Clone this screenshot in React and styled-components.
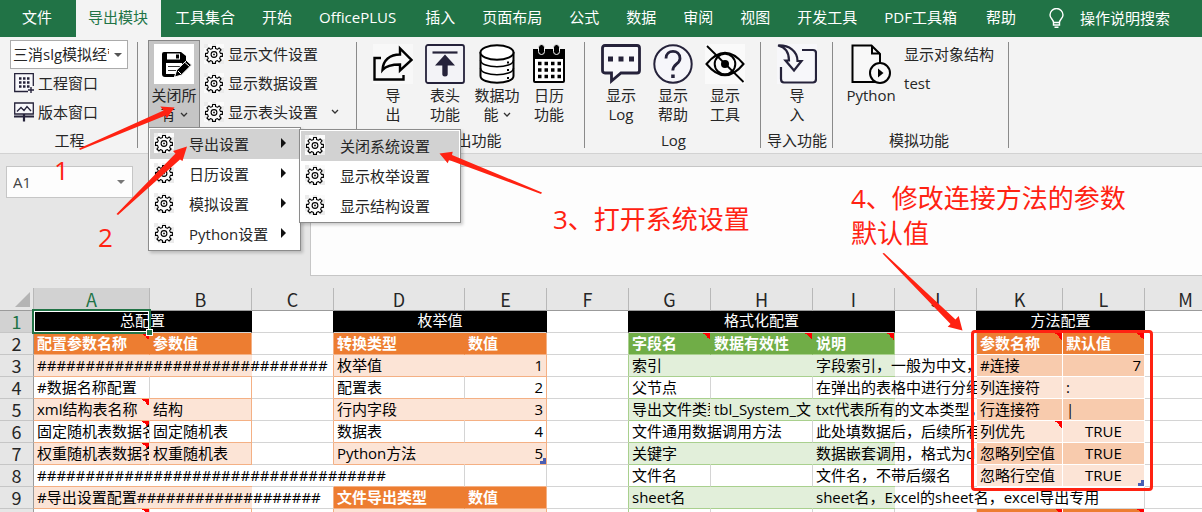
import React from "react";
import styled, { createGlobalStyle, css } from "styled-components";

const sans = `"Open Sans", "Noto Sans CJK SC", sans-serif`;
const GREEN = "#217346";
const RED = "#ff2212";
const ORANGE = "#ed7d31";
const PEACH = "#fce4d6";
const TAN = "#f8cbad";
const OLINE = "#f4b084";
const LEAF = "#70ad47";
const MINT = "#e2efda";
const GLINE = "#a9d08e";
const LINE = "#d4d4d4";

const Global = createGlobalStyle`
  * { box-sizing: border-box; }
  body { margin: 0; overflow: hidden; background: #e6e6e6; font: 15px/20px ${sans}; color: #262626; }
  button, input, select { font: inherit; color: inherit; margin: 0; padding: 0; border: 0; background: none; }
  svg { display: block; flex: none; }
`;

const Page = styled.div`
  position: relative;
  display: flex;
  flex-direction: column;
  height: 100vh;
  overflow: hidden;
`;

/* tab strip */
const Tabs = styled.nav`
  display: flex;
  height: 37px;
  background: ${GREEN};
`;
const Tab = styled.button`
  padding: 0 ${(p) => p.$latin ? 15 : 13}px 4px 14px;
  color: #fff;
  white-space: nowrap;
  ${(p) => p.$file && css`padding: 0 24px 4px 22px;`}
  ${(p) => p.$active && css`padding: 0 13px 4px 12px; background: #f3f3f3; color: ${GREEN};`}
`;
const Search = styled.button`
  display: flex;
  align-items: center;
  gap: 16px;
  padding: 0 14px 2px 20px;
  color: #fff;
  white-space: nowrap;
`;

/* ribbon */
const Ribbon = styled.div`
  display: flex;
  height: 117px;
  background: #f3f3f3;
  border-bottom: 1px solid #d2d2d2;
`;
const Group = styled.section`
  position: relative;
  display: flex;
  flex-direction: column;
  padding: 3px ${(p) => p.$right ?? 9}px 0 ${(p) => p.$left ?? 10}px;
  background: linear-gradient(#8a8a8a, #8a8a8a) right 5px / 1px 106px no-repeat;
`;
const GroupBody = styled.div`
  display: flex;
  height: 90px;
  padding-right: 1px;
`;
const GroupLabel = styled.div`
  height: 20px;
  text-align: center;
  white-space: nowrap;
`;
const BigButton = styled.button`
  display: flex;
  flex-direction: column;
  align-items: center;
  width: ${(p) => p.$wide ? 56 : 52}px;
  height: 88px;
  padding-top: 4px;
  line-height: 19px;
  border: 0 solid #868686;
  ${(p) => p.$pressed && css`background: #c5c5c5; border-width: 1px; padding-top: 3px;`}
`;
const BigText = styled.span`
  display: flex;
  align-items: center;
  justify-content: center;
  gap: 4px;
  white-space: nowrap;
`;
const IconBox = styled.span`
  margin-bottom: 2px;
`;
const Stack = styled.div`
  display: flex;
  flex-direction: column;
  padding-left: ${(p) => p.$pad ?? 4}px;
`;
const SmallButton = styled.button`
  display: flex;
  align-items: center;
  gap: 4px;
  height: 29px;
  padding-bottom: 2px;
  white-space: nowrap;
`;
const ChevronSpace = styled.span`
  padding-left: 9px;
`;
const Project = styled.div`
  display: flex;
  flex-direction: column;
  width: 118px;
`;
const ProjectRow = styled.div`
  display: flex;
  padding-left: 4px;
`;
const SelectWrap = styled.div`
  display: flex;
  align-items: center;
  height: 29px;
  padding-right: 5px;
  background: #fff;
  border: 1px solid #ababab;
`;
const Select = styled.select`
  appearance: none;
  flex: 1;
  min-width: 0;
  height: 27px;
  margin-right: 5px;
  padding: 0 0 1px 2px;
  overflow: hidden;
  outline: 0;
`;

/* menus */
const Menu = styled.div`
  position: absolute;
  z-index: 3;
  top: ${(p) => p.$sub ? 92 : 90}px;
  left: ${(p) => p.$sub ? 161 : 10}px;
  width: ${(p) => p.$sub ? 162 : 153}px;
  padding: 1px;
  background: #fff;
  border: 1px solid #8c8c8c;
  box-shadow: 2px 2px 3px #0003;
`;
const MenuItem = styled.button`
  display: flex;
  align-items: center;
  width: 100%;
  height: 30px;
  padding: 0 12px 2px 4px;
  text-align: left;
  background: ${(p) => p.$active ? "#d2d2d2" : "#fff"};
`;
const MenuText = styled.span`
  flex: 1;
  padding: 1px 0 0 15px;
  white-space: nowrap;
`;

/* name box and formula box */
const FormulaRow = styled.div`
  display: flex;
  justify-content: space-between;
  height: 134px;
  padding: 12px 0 12px 6px;
`;
const NameBox = styled.div`
  display: flex;
  align-items: center;
  width: 127px;
  height: 32px;
  padding-right: 7px;
  background: #fdfdfd;
  border: 1px solid #c6c6c6;
`;
const NameInput = styled.input`
  flex: 1;
  min-width: 0;
  padding-left: 6px;
  color: #444;
  outline: 0;
`;
const Formula = styled.input`
  flex: 1;
  margin-left: 177px;
  background: #fdfdfd;
  border: 1px solid #c6c6c6;
  border-right: 0;
`;

/* sheet */
const SheetWrap = styled.main`
  position: relative;
  flex: 1;
  overflow: hidden;
  background: #fff;
`;
const Sheet = styled.table`
  table-layout: fixed;
  width: 1227px;
  border-collapse: separate;
  border-spacing: 0;
  color: #000;
`;
const Col = styled.col`
  width: ${(p) => p.$w}px;
`;
const ColHead = styled.th`
  height: 23px;
  padding: 0;
  font: 400 18px/20px "Noto Sans CJK SC", sans-serif;
  color: ${(p) => p.$on ? GREEN : "#262626"};
  background: ${(p) => p.$on ? "#d2d2d2" : "#e6e6e6"};
  border-right: 1px solid #b8b8b8;
  border-bottom: 1px solid #9b9b9b;
`;
const RowHead = styled.th`
  height: 22px;
  padding: 0;
  font: 400 18px/21px "Noto Sans CJK SC", sans-serif;
  color: ${(p) => p.$on ? GREEN : "#262626"};
  background: ${(p) => p.$on ? "#d2d2d2" : "#e6e6e6"};
  border-right: 1px solid #9b9b9b;
  border-bottom: 1px solid #c6c6c6;
`;
const Corner = styled.svg`
  margin: 0 0 0 15px;
`;
const Cell = styled.td`
  height: 22px;
  padding: 0;
  line-height: ${(p) => p.$title ? 18 : 20}px;
  vertical-align: top;
  text-align: ${(p) => p.$align || "left"};
  font-weight: ${(p) => p.$bold ? 700 : 400};
  color: ${(p) => p.$ink || "#000"};
  background-color: ${(p) => p.$bg || "transparent"};
  ${(p) => p.$note && css`
    background-image: linear-gradient(to top right, transparent 50%, #f00 50%);
    background-size: 7px 7px;
    background-position: right top;
    background-repeat: no-repeat;
  `}
  border-right: ${(p) => p.$v === "none" ? 0 : `1px solid ${p.$v || LINE}`};
  border-bottom: 1px solid ${(p) => p.$h || LINE};
`;
const CellText = styled.div`
  width: calc(100% + ${(p) => p.$spill || 0}px);
  height: 21px;
  padding: 0 3px;
  overflow: hidden;
  white-space: nowrap;
`;
const Selection = styled.div`
  position: absolute;
  top: 21px;
  left: 32px;
  width: 119px;
  height: 25px;
  border: 2px solid ${GREEN};
  box-shadow: inset 0 0 0 1px #fff;
`;
const Handle = styled.div`
  position: absolute;
  right: -4px;
  bottom: -4px;
  width: 7px;
  height: 7px;
  background: ${GREEN};
  border: 1px solid #fff;
`;
const TableEnd = styled.svg`
  position: absolute;
  left: ${(p) => p.$x}px;
  top: ${(p) => p.$y}px;
`;

/* red tutorial marks drawn above everything */
const Arrows = styled.svg`
  position: absolute;
  z-index: 5;
  top: 0;
  left: 0;
  pointer-events: none;
`;
const Note = styled.p`
  position: absolute;
  z-index: 5;
  left: ${(p) => p.$x}px;
  top: ${(p) => p.$y}px;
  margin: 0;
  font-size: 26px;
  line-height: 35px;
  white-space: nowrap;
  color: ${RED};
`;
const Frame = styled.div`
  position: absolute;
  z-index: 5;
  left: 971px;
  top: 330px;
  width: 182px;
  height: 161px;
  border: 3px solid ${RED};
  border-radius: 4px;
`;

const Gear = () => (
  <svg width="20" height="20" viewBox="0 0 20 20">
    <path fill="#fbfbfb" d="M0 0h20v20H0z" />
    <path fill="#ebebeb" d="M0 0h4v4H0zM8 0h4v2H8zM0 12h3v4H0zM16 4h4v4h-4zM15 16h5v4h-5zM4 17h4v3H4z" />
    <g fill="none" stroke="#000" strokeWidth="1.1" strokeLinejoin="round">
      <path d="M8.500 4.500V2.500h3v2l2 .8 1.600-1.500 2 2-1.500 1.700.8 1.900h2v3h-2l-.8 2 1.500 1.600-2 2-1.700-1.400-1.900.8v2h-3v-2l-2-.8-1.600 1.400-2-2 1.400-1.600-.8-2h-2v-3h2l.8-1.900-1.400-1.700 2-2 1.700 1.500z" />
      <circle cx="10" cy="10.500" r="2.900" />
    </g>
    <path d="M9.200 9.700h1.600v1.600H9.200z" />
  </svg>
);
const Chevron = () => (
  <svg width="8" height="6" viewBox="0 0 8 6"><path d="M1 1l3 3 3-3" fill="none" stroke="#333" strokeWidth="1.3" /></svg>
);
const Caret = ({ fill = "#555" }) => (
  <svg width="8" height="4" viewBox="0 0 8 4"><path d="M0 0h8L4 4z" fill={fill} /></svg>
);
const MenuArrow = () => (
  <svg width="6" height="10" viewBox="0 0 6 10"><path d="M0 0l5 5-5 5z" fill="#111" /></svg>
);

const INK = "#25223a";
const art = {
  save: (
    <>
      <path fill="#fff" d="M0 0h40v40H0z" />
      <path fill="#000" fillRule="evenodd" d="M10 8h17l5 4v5l-4 4V19H12v11h10l-1 3H11q-3 0-3-3V10q0-2 2-2zM13 9.500v6h13v-6z" />
      <path fill="#000" d="M22 10.500h3v4h-3z" />
      <path fill="#fff" d="M12 20h17v10H12z" />
      <path stroke="#333" fill="none" d="M14 22.500h12M14 26.500h9" />
      <path d="M20.500 33l2.200-7L32.500 16.500l5 4.500-10.300 10.200z" fill="#000" stroke="#fff" />
      <path d="M31 18.500l4.500 4M24 27l3 3" stroke="#fff" />
    </>
  ),
  share: (
    <>
      <path d="M0 0h40v40H0z" fill="#f8f8f8" />
      <g fill="none" stroke="#000" strokeWidth="2.4">
        <path d="M8 14H1.500v21.500h29V31" />
        <path d="M9.500 26C10 16 17 10.500 27 10.500V4.500L38.500 16 27 26.500v-6C18 20.500 13 22 9.500 26z" />
      </g>
    </>
  ),
  top: (
    <>
      <rect x="1" y="1" width="38" height="38" rx="2" fill="#f3f3f7" stroke={INK} strokeWidth="1.800" />
      <path d="M7.500 8.500h25" stroke={INK} strokeWidth="2.200" />
      <path d="M20 10.500l10 11h-7.300v9q0 2-2.700 2t-2.700-2v-9H10z" fill={INK} />
    </>
  ),
  data: (
    <g fill="#fff" stroke="#000" strokeWidth="2">
      <path d="M3.500 8v24c0 9 33 9 33 0V8" />
      <ellipse cx="20" cy="8.500" rx="16.500" ry="7.300" />
      <path fill="none" strokeWidth="1.500" d="M3.500 16c0 9 33 9 33 0M3.500 24c0 9 33 9 33 0" />
      <path d="M31 17.500v2M31 25v2M31 33v2" strokeWidth="2" />
    </g>
  ),
  calendar: (
    <>
      <rect x="5" y="6" width="30" height="32" rx="1" fill="#fff" stroke="#000" strokeWidth="2" />
      <path d="M4 5h32v10H4z" />
      <g fill="#000" stroke="#f3f3f3"><rect x="9.500" y=".5" width="6" height="10" rx="3" /><rect x="24.500" y=".5" width="6" height="10" rx="3" /></g>
      <path stroke="#000" strokeWidth="3.500" strokeDasharray="3.500 3" d="M9 19.500h23M9 26h23M9 32.500h23" />
    </>
  ),
  chat: (
    <>
      <path d="M4 1.500h32q2.500 0 2.500 2.500v22.500q0 2.500-2.500 2.500H20l-9.500 8V29H4q-2.500 0-2.500-2.500V4Q1.500 1.500 4 1.500z" fill="#f8f8fb" stroke={INK} strokeWidth="2.800" />
      <path d="M7 12.500h5v5H7zM17.500 12.500h5v5h-5zM28 12.500h5v5h-5z" fill={INK} />
    </>
  ),
  help: (
    <>
      <circle cx="20" cy="20" r="18.700" fill="#f6f6fa" stroke={INK} strokeWidth="2" />
      <path d="M13 14.500c0-9.500 14-9.500 14 0 0 5.500-7.200 5.500-7.200 12" fill="none" stroke={INK} strokeWidth="2.800" />
      <path d="M18.200 30.500h3.500V34h-3.500z" fill={INK} />
    </>
  ),
  eye: (
    <>
      <path d="M0 0h40v40H0z" fill="#fafafa" />
      <path d="M1.500 20Q20-2.500 38.500 20 20 42.500 1.500 20z" fill="#fafafa" stroke="#000" strokeWidth="2" />
      <circle cx="20" cy="20" r="10.300" fill="none" stroke="#000" strokeWidth="2" />
      <circle cx="20" cy="20" r="4" />
      <path d="M2 2l36.500 36" stroke="#000" strokeWidth="1.800" />
    </>
  ),
  importing: (
    <>
      <path d="M0 0h40v40H0z" fill="#f7f7fa" />
      <g fill="none" stroke={INK} strokeWidth="2.200">
        <path d="M25 6h11q3 0 3 3v26q0 3.500-3 3.500H7q-3 0-3-3.500V23" />
        <path d="M1 1.500C8 3 12 8 12 16.500H8.500l8.500 10L24.500 17H20.500C20.500 7 12 1 1 1.500z" />
      </g>
    </>
  ),
  script: (
    <>
      <path d="M1.500 1.500h19L29 10v28H1.500z" fill="#f8f8f8" stroke="#000" strokeWidth="2" />
      <path d="M21 2v7.500h8" fill="none" stroke="#000" strokeWidth="2" />
      <circle cx="29" cy="29" r="10" fill="#f8f8f8" stroke="#000" strokeWidth="2" />
      <path d="M27 24.500l5.500 4.500-5.500 4.500z" />
    </>
  ),
};
const Icon = ({ name }) => <IconBox><svg width="40" height="40" viewBox="0 0 40 40">{art[name]}</svg></IconBox>;

const Big = ({ icon, lines, chevron, ...rest }) => (
  <BigButton {...rest}>
    <Icon name={icon} />
    {lines.map((l, i) => (
      <BigText key={l}>{l}{chevron && i === lines.length - 1 && <Chevron />}</BigText>
    ))}
  </BigButton>
);

const tabs = ["工具集合", "开始", "OfficePLUS", "插入", "页面布局", "公式", "数据", "审阅", "视图", "开发工具", "PDF工具箱", "帮助"];

/* sheet content: one array of cells for each row, left to right */
const widths = [34, 116, 102, 82, 131, 82, 82, 82, 102, 82, 82, 86, 82, 82];
const black = (t, span) => ({ t, span, bg: "#000", ink: "#fff", align: "center", v: "#000", title: true });
const head = (t, o) => ({ t, bg: ORANGE, ink: "#fff", bold: true, v: ORANGE, h: OLINE, ...o });
const peach = (t, o) => ({ t, bg: PEACH, v: PEACH, h: OLINE, ...o });
const plain = (t, o) => ({ t, h: OLINE, ...o });
const ghead = (t, o) => ({ t, bg: LEAF, ink: "#fff", bold: true, v: LEAF, h: GLINE, note: true, ...o });
const mint = (t, o) => ({ t, bg: MINT, v: MINT, h: GLINE, ...o });
const gplain = (t, o) => ({ t, h: GLINE, ...o });
const tan = (t, o) => ({ t, bg: TAN, v: "#fff", h: "#fff", ...o });
const soft = (t, o) => ({ t, bg: PEACH, v: "#fff", h: "#fff", ...o });
const E = {};
const toOrange = { v: OLINE };
const toGreen = { v: GLINE };
const bare = { v: "none" };
const wide = { spill: 82, v: "none" };

const rows = [
  [black("总配置", 2), { v: "#000" }, black("枚举值", 2), { v: "#000" }, black("格式化配置", 3), { v: "#000" }, black("方法配置", 2), E],
  [head("配置参数名称", { note: true }), head("参数值", toOrange), toOrange, head("转换类型"), head("数值", toOrange), toGreen,
    ghead("字段名"), ghead("数据有效性"), ghead("说明", toGreen), E, head("参数名称", { note: true, v: "#fff", h: "#fff" }), head("默认值", { note: true, v: "#fff", h: "#fff" }), E],
  [peach("#".repeat(30), { spill: 183 }), peach("", bare), toOrange, peach("枚举值"), peach("1", { align: "right", v: OLINE }), toGreen,
    mint("索引"), mint(""), mint("字段索引，一般为中文，", wide), bare, tan("#连接"), tan("7", { align: "right" }), E],
  [plain("#数据名称配置"), plain("", toOrange), toOrange, plain("配置表"), plain("2", { align: "right", v: OLINE }), toGreen,
    gplain("父节点"), gplain(""), gplain("在弹出的表格中进行分组", wide), bare, soft("列连接符"), soft(":"), E],
  [peach("xml结构表名称", { note: true }), peach("结构", toOrange), toOrange, peach("行内字段"), peach("3", { align: "right", v: OLINE }), toGreen,
    mint("导出文件类型"), mint("tbl_System_文"), mint("txt代表所有的文本类型，", wide), bare, tan("行连接符"), tan("|"), E],
  [plain("固定随机表数据名", { note: true }), plain("固定随机表", toOrange), toOrange, plain("数据表"), plain("4", { align: "right", v: OLINE }), toGreen,
    gplain("文件通用数据调用方法", { spill: 101, v: "none" }), gplain(""), gplain("此处填数据后，后续所有", wide), bare, soft("列优先", { note: true }), soft("TRUE", { align: "center" }), E],
  [peach("权重随机表数据名", { note: true }), peach("权重随机表", toOrange), toOrange, peach("Python方法"), peach("5", { align: "right", v: OLINE }), toGreen,
    mint("关键字"), mint(""), mint("数据嵌套调用，格式为d", wide), bare, tan("忽略列空值"), tan("TRUE", { align: "center" }), E],
  [plain("#".repeat(36), { spill: 314, v: "none" }), plain("", bare), bare, { h: OLINE }, { h: OLINE }, toGreen,
    gplain("文件名"), gplain(""), gplain("文件名，不带后缀名", wide), bare, soft("忽略行空值"), soft("TRUE", { align: "center" }), E],
  [peach("#导出设置配置" + "#".repeat(19), { spill: 183 }), peach("", bare), toOrange, head("文件导出类型"), head("数值", toOrange), toGreen,
    mint("sheet名"), mint(""), mint("sheet名，Excel的sheet名，excel导出专用", { spill: 249, v: "none" }), bare, bare, E, E],
  [plain("", { note: true }), plain("", toOrange), toOrange, peach(""), peach("", toOrange), toGreen,
    gplain(""), gplain(""), gplain(""), E, head("", { note: true, v: "#fff" }), head("", { note: true, v: "#fff" }), E],
];

function Grid() {
  return (
    <SheetWrap>
      <Sheet>
        <colgroup>{widths.map((w, i) => <Col key={i} $w={w} />)}</colgroup>
        <thead>
          <tr>
            <ColHead><Corner width="15" height="15"><path d="M15 0v15H0z" fill="#b4b4b4" /></Corner></ColHead>
            {"ABCDEFGHIJKLM".split("").map((c) => <ColHead key={c} $on={c === "A"}>{c}</ColHead>)}
          </tr>
        </thead>
        <tbody>
          {rows.map((cells, r) => (
            <tr key={r}>
              <RowHead $on={r === 0}>{r + 1}</RowHead>
              {cells.map((c, i) => (
                <Cell key={i} colSpan={c.span || 1} $title={c.title} $bg={c.bg} $ink={c.ink} $bold={c.bold} $align={c.align} $note={c.note} $v={c.v} $h={c.h}>
                  {c.t && <CellText $spill={c.spill}>{c.t}</CellText>}
                </Cell>
              ))}
            </tr>
          ))}
        </tbody>
      </Sheet>
      <Selection><Handle /></Selection>
      <TableEnd $x={540} $y={170} width="6" height="6"><path d="M3 0h3v6H0V3h3z" fill="#4a5fb5" /></TableEnd>
      <TableEnd $x={1138} $y={192} width="6" height="6"><path d="M3 0h3v6H0V3h3z" fill="#4a5fb5" /></TableEnd>
    </SheetWrap>
  );
}

export default function App() {
  return (
    <Page>
      <Global />
      <Tabs>
        <Tab $file>文件</Tab>
        <Tab $active>导出模块</Tab>
        {tabs.map((t) => <Tab key={t} $latin={/^[A-Z]/.test(t)}>{t}</Tab>)}
        <Search>
          <svg width="15" height="20" viewBox="0 0 15 20" fill="none" stroke="#fff" strokeWidth="1.400">
            <path d="M4.500 14.500c0-3-3.500-4-3.500-7.500a6.500 6.500 0 0 1 13 0c0 3.500-3.500 4.500-3.500 7.500zM4.500 14.500v2.500h6v-2.500M5.500 19.200h4" />
          </svg>
          操作说明搜索
        </Search>
      </Tabs>

      <Ribbon>
        <Group>
          <GroupBody>
            <Project>
              <SelectWrap>
                <Select aria-label="工程" defaultValue="a"><option value="a">三消slg模拟经营</option></Select>
                <Caret />
              </SelectWrap>
              <ProjectRow>
                <SmallButton>
                  <svg width="20" height="20" viewBox="0 0 20 20">
                    <path d="M14 18.500H.7V.7h18.600V13" fill="#f8f8fb" stroke={INK} strokeWidth="1.300" />
                    <path d="M5 5.500h11M5 9.500h11M5 13.500h11" stroke={INK} strokeWidth="2.500" strokeDasharray="2.500 1.500" />
                    <path d="M17 14v6M14 17h6" stroke={INK} strokeWidth="1.400" />
                  </svg>
                  工程窗口
                </SmallButton>
              </ProjectRow>
              <ProjectRow>
                <SmallButton>
                  <svg width="20" height="20" viewBox="0 0 20 20" fill="none" stroke={INK} strokeWidth="1.300">
                    <path d="M.7 1h18.600v11H.7z" fill="#f8f8fb" />
                    <path d="M3 9.500l4-4 3 3 3-4 4 4.500" />
                    <path d="M0 14.500h20M10 12v7.500" strokeWidth="2.200" />
                  </svg>
                  版本窗口
                </SmallButton>
              </ProjectRow>
            </Project>
          </GroupBody>
          <GroupLabel>工程</GroupLabel>
        </Group>

        <Group $right={17}>
          <GroupBody>
            <Big icon="save" lines={["关闭所", "有"]} chevron $pressed />
            <Stack>
              <SmallButton><Gear />显示文件设置</SmallButton>
              <SmallButton><Gear />显示数据设置</SmallButton>
              <SmallButton><Gear />显示表头设置<ChevronSpace><Chevron /></ChevronSpace></SmallButton>
            </Stack>
          </GroupBody>
          <Menu>
            {["导出设置", "日历设置", "模拟设置", "Python设置"].map((t, i) => (
              <MenuItem key={t} $active={i === 0}><Gear /><MenuText>{t}</MenuText><MenuArrow /></MenuItem>
            ))}
          </Menu>
          <Menu $sub>
            {["关闭系统设置", "显示枚举设置", "显示结构设置"].map((t, i) => (
              <MenuItem key={t} $active={i === 0}><Gear /><MenuText>{t}</MenuText></MenuItem>
            ))}
          </Menu>
        </Group>

        <Group>
          <GroupBody>
            <Big icon="share" lines={["导", "出"]} />
            <Big icon="top" lines={["表头", "功能"]} />
            <Big icon="data" lines={["数据功", "能"]} chevron />
            <Big icon="calendar" lines={["日历", "功能"]} />
          </GroupBody>
          <GroupLabel>导出功能</GroupLabel>
        </Group>

        <Group>
          <GroupBody>
            <Big icon="chat" lines={["显示", "Log"]} />
            <Big icon="help" lines={["显示", "帮助"]} />
            <Big icon="eye" lines={["显示", "工具"]} />
          </GroupBody>
          <GroupLabel>Log</GroupLabel>
        </Group>

        <Group $left={6} $right={6}>
          <GroupBody>
            <Stack><Big icon="importing" lines={["导", "入"]} /></Stack>
          </GroupBody>
          <GroupLabel>导入功能</GroupLabel>
        </Group>

        <Group $right={14}>
          <GroupBody>
            <Big icon="script" lines={["Python"]} $wide />
            <Stack $pad={5}>
              <SmallButton>显示对象结构</SmallButton>
              <SmallButton>test</SmallButton>
            </Stack>
          </GroupBody>
          <GroupLabel>模拟功能</GroupLabel>
        </Group>
      </Ribbon>

      <FormulaRow>
        <NameBox>
          <NameInput aria-label="名称框" defaultValue="A1" />
          <Caret fill="#777" />
        </NameBox>
        <Formula aria-label="编辑栏" />
      </FormulaRow>

      <Grid />

      <Arrows width="1202" height="512" viewBox="0 0 1202 512" fill={RED}>
        <path d="M79 148.500L163.500 110.500 160.300 106.500 174.500 107.500 166.700 118.500 165.500 115.500 80 150z" />
        <path d="M116.500 214L175.500 153.500 173 151 187 146.500 182.500 161 180 159.500 118 215z" />
        <path d="M439.500 153.500L452.700 151.700 452 155 542 192.500 541 194 449 160 447.700 163.300z" />
        <path d="M882.500 253.500L884 253 955.500 319.500 958.700 316 962.500 330.500 947.700 326.700 950.500 324z" />
      </Arrows>
      <Note $x={54} $y={153}>1</Note>
      <Note $x={98} $y={220}>2</Note>
      <Note $x={553} $y={202}>3、打开系统设置</Note>
      <Note $x={851} $y={181}>4、修改连接方法的参数<br />默认值</Note>
      <Frame />
    </Page>
  );
}
